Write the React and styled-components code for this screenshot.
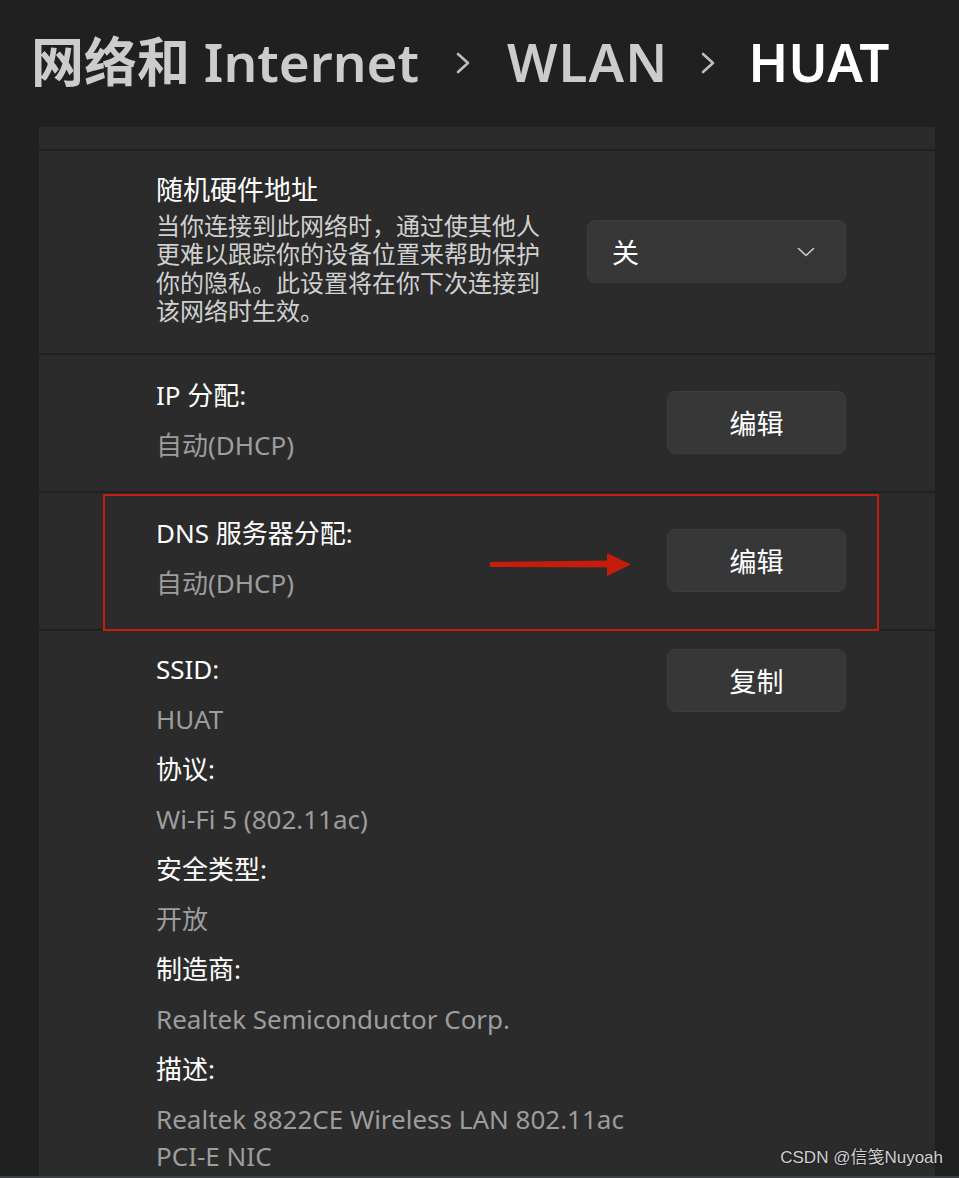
import styled, { createGlobalStyle } from 'styled-components';

const GlobalStyle = createGlobalStyle`
  html, body {
    margin: 0;
    padding: 0;
    background: #202020;
  }
  * {
    box-sizing: border-box;
  }
`;

const FONT = `"Noto Sans", "Noto Sans CJK SC", sans-serif`;

const Page = styled.div`
  width: 959px;
  height: 1178px;
  overflow: hidden;
  position: relative;
  display: flex;
  flex-direction: column;
  background: #202020;
  font-family: ${FONT};
`;

const Header = styled.div`
  height: 127px;
  flex: none;
  display: flex;
  align-items: center;
  padding: 0 0 4px 31px;
  font-size: 53px;
  font-weight: 600;
  line-height: 1;
`;

const Crumb = styled.span`
  color: ${(p) => (p.$current ? '#ffffff' : '#cccccc')};
  letter-spacing: ${(p) => p.$ls || '0px'};
  white-space: nowrap;
`;

const CrumbSep = styled.span`
  display: flex;
  align-items: center;
  width: ${(p) => p.$w || '88px'};
  justify-content: center;
  padding-top: 2px;
`;

const Panel = styled.div`
  flex: 1;
  min-height: 0;
  margin-left: 39px;
  width: 896px;
  display: flex;
  flex-direction: column;
  gap: 2px;
`;

const Card = styled.div`
  position: relative;
  background: #2b2b2b;
  display: flex;
  align-items: ${(p) => p.$align || 'center'};
  justify-content: space-between;
  padding: ${(p) => p.$pad || '0 89px 0 117px'};
  flex: ${(p) => (p.$grow ? 1 : 'none')};
  min-height: 0;
  overflow: ${(p) => (p.$grow ? 'hidden' : 'visible')};
`;

const TopStrip = styled.div`
  height: 22px;
  flex: none;
  background: #2b2b2b;
`;

const TextBlock = styled.div`
  display: flex;
  flex-direction: column;
`;

const Title = styled.div`
  color: #ffffff;
  font-size: 27px;
  line-height: 36px;
`;

const Desc = styled.div`
  color: #d0d0d0;
  font-size: 24px;
  line-height: 28.3px;
  width: 390px;
  margin-top: 4px;
`;

const InfoList = styled.div`
  display: flex;
  flex-direction: column;
  gap: 13px;
  padding-top: ${(p) => p.$top || '0px'};
`;

const Entry = styled.div`
  display: flex;
  flex-direction: column;
  gap: 13px;
`;

const Label = styled.div`
  color: #ffffff;
  font-size: 26px;
  line-height: 37px;
  white-space: nowrap;
`;

const Value = styled.div`
  color: #9d9d9d;
  font-size: 26px;
  line-height: 37px;
  white-space: nowrap;
`;

const Button = styled.button`
  width: 179px;
  height: 63px;
  flex: none;
  background: #373737;
  border: 1px solid #3d3d3d;
  border-radius: 8px;
  color: #ffffff;
  font-family: ${FONT};
  font-size: 27px;
  padding: 0;
  margin-top: ${(p) => p.$mt || '0px'};
`;

const Select = styled.div`
  width: 259px;
  height: 63px;
  flex: none;
  margin-top: 6px;
  background: #373737;
  border: 1px solid #3d3d3d;
  border-radius: 8px;
  display: flex;
  align-items: center;
  justify-content: space-between;
  padding: 0 30px 0 24px;
  color: #ffffff;
  font-size: 27px;
`;

const Highlight = styled.div`
  position: absolute;
  left: 64px;
  top: 1px;
  width: 776px;
  height: 137px;
  border: 2px solid #c41d0c;
  pointer-events: none;
`;

const Arrow = styled.svg`
  position: absolute;
  left: 451px;
  top: 60px;
`;

const Watermark = styled.div`
  position: absolute;
  right: 16px;
  bottom: 10px;
  color: #cfcfcf;
  font-family: "Liberation Sans", "Noto Sans CJK SC", sans-serif;
  font-size: 17px;
  text-shadow: 0 0 2px rgba(0, 0, 0, 0.6);
`;

const BottomEdge = styled.div`
  height: 2px;
  flex: none;
  background: #3a3e42;
`;

const Chevron = () => (
  <svg width="16" height="22" viewBox="0 0 16 22">
    <path d="M3 2 L13 11 L3 20" fill="none" stroke="#bdbdbd" strokeWidth="2.6" strokeLinecap="round" strokeLinejoin="round" />
  </svg>
);

const Caret = () => (
  <svg width="18" height="10" viewBox="0 0 18 10">
    <path d="M1.5 1.5 L9 8.5 L16.5 1.5" fill="none" stroke="#cfcfcf" strokeWidth="1.6" strokeLinecap="round" strokeLinejoin="round" />
  </svg>
);

const details = [
  ['SSID:', ['HUAT']],
  ['协议:', ['Wi-Fi 5 (802.11ac)']],
  ['安全类型:', ['开放']],
  ['制造商:', ['Realtek Semiconductor Corp.']],
  ['描述:', ['Realtek 8822CE Wireless LAN 802.11ac', 'PCI-E NIC']],
];

export default function App() {
  return (
    <>
      <GlobalStyle />
      <Page>
        <Header>
          <Crumb>网络和 Internet</Crumb>
          <CrumbSep><Chevron /></CrumbSep>
          <Crumb $ls="1px">WLAN</Crumb>
          <CrumbSep $w="80px"><Chevron /></CrumbSep>
          <Crumb $current>HUAT</Crumb>
        </Header>

        <Panel>
          <TopStrip />

          <Card $pad="21px 89px 28px 117px">
            <TextBlock>
              <Title>随机硬件地址</Title>
              <Desc>当你连接到此网络时，通过使其他人更难以跟踪你的设备位置来帮助保护你的隐私。此设置将在你下次连接到该网络时生效。</Desc>
            </TextBlock>
            <Select>
              <span>关</span>
              <Caret />
            </Select>
          </Card>

          <Card $pad="22px 89px 27px 117px">
            <InfoList>
              <Label>IP 分配:</Label>
              <Value>自动(DHCP)</Value>
            </InfoList>
            <Button $mt="4px">编辑</Button>
          </Card>

          <Card $pad="22px 89px 27px 117px">
            <InfoList>
              <Label>DNS 服务器分配:</Label>
              <Value>自动(DHCP)</Value>
            </InfoList>
            <Button $mt="4px">编辑</Button>
            <Highlight />
            <Arrow width="142" height="24" viewBox="0 0 142 24">
              <polygon points="0,9 117,7.5 117,0 141,11.5 117,23 117,14.5 0,14" fill="#c41d0c" />
            </Arrow>
          </Card>

          <Card $grow $align="flex-start" $pad="18px 89px 0 117px">
            <InfoList $top="2px">
              {details.map(([label, values]) => (
                <Entry key={label}>
                  <Label>{label}</Label>
                  <div>
                    {values.map((v) => (
                      <Value key={v}>{v}</Value>
                    ))}
                  </div>
                </Entry>
              ))}
            </InfoList>
            <Button>复制</Button>
          </Card>
        </Panel>

        <BottomEdge />
        <Watermark>CSDN @信笺Nuyoah</Watermark>
      </Page>
    </>
  );
}
